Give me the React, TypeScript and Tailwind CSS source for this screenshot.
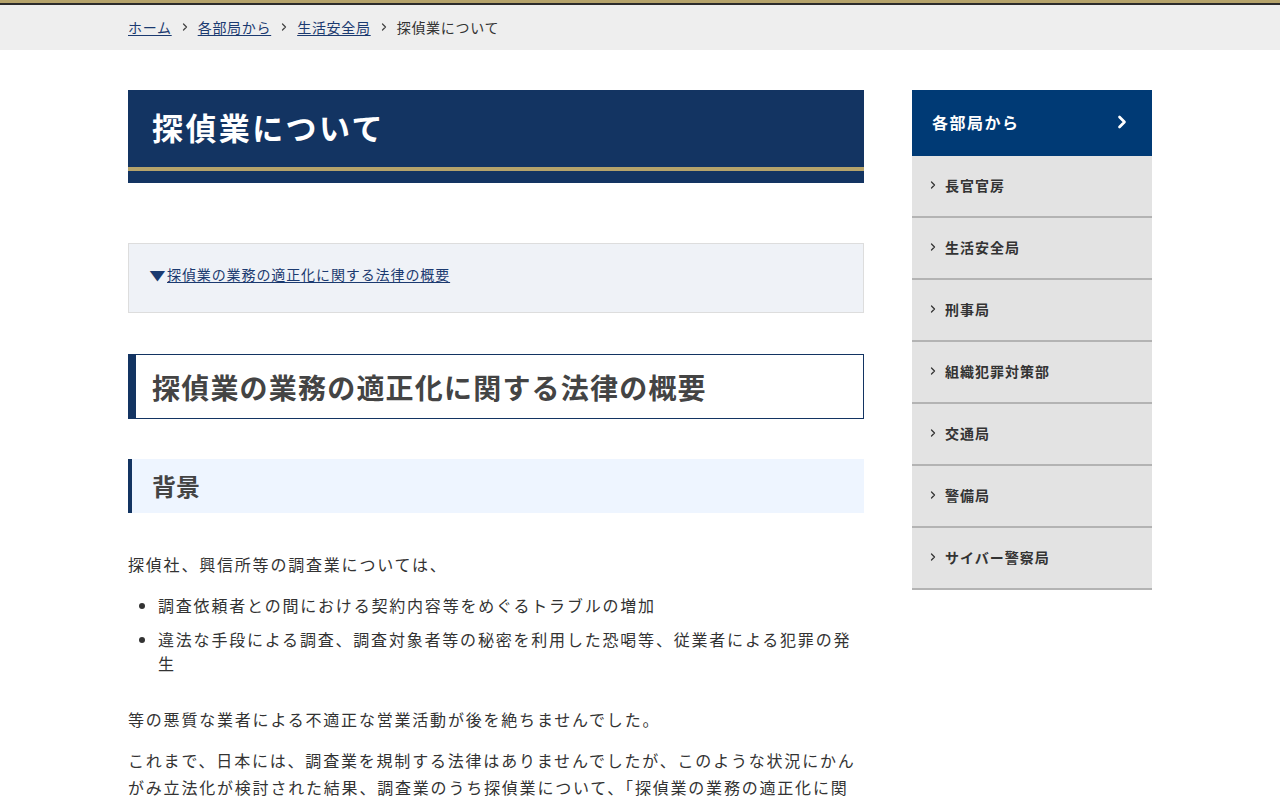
import { ChevronRight } from 'lucide-react';

const font = { fontFamily: '"Noto Sans CJK JP", "Noto Sans", sans-serif' };

const bureaus = ['長官官房', '生活安全局', '刑事局', '組織犯罪対策部', '交通局', '警備局', 'サイバー警察局'];

export default function App() {
  return (
    <div className="min-h-screen bg-white text-[#333]" style={font}>
      <div className="h-[3px] bg-[#b5a36b]" />
      <div className="h-[2px] bg-[#2b2b2b]" />
      <nav className="bg-[#eeeeee] h-[45px] flex items-center">
        <div className="w-[1024px] mx-auto flex items-center gap-[7px] text-[14px] tracking-[0.7px] -mt-[1px]">
          <a href="#" className="text-[#1b3a70] underline underline-offset-2 decoration-1">ホーム</a>
          <ChevronRight className="w-[12px] h-[12px] text-[#444]" strokeWidth={2.5} />
          <a href="#" className="text-[#1b3a70] underline underline-offset-2 decoration-1">各部局から</a>
          <ChevronRight className="w-[12px] h-[12px] text-[#444]" strokeWidth={2.5} />
          <a href="#" className="text-[#1b3a70] underline underline-offset-2 decoration-1">生活安全局</a>
          <ChevronRight className="w-[12px] h-[12px] text-[#444]" strokeWidth={2.5} />
          <span className="text-[#333]">探偵業について</span>
        </div>
      </nav>

      <div className="w-[1024px] mx-auto flex gap-[48px] pt-[40px]">
        <main className="w-[736px]">
          <div className="bg-[#133462]">
            <h1 className="h-[77px] px-[24px] flex items-center text-[31px] tracking-[2.4px] font-bold text-white pb-[3px]">探偵業について</h1>
            <div className="h-[4px] bg-[#b5a36b]" />
            <div className="h-[12px]" />
          </div>

          <div className="mt-[60px] h-[70px] bg-[#eff2f7] border border-[#dddddd] flex items-center pl-[22px] pb-[8px]">
            <span className="text-[#1b3a70] text-[13px] mr-[3px] leading-none scale-x-125">▼</span>
            <a href="#" className="text-[14px] tracking-[0.9px] text-[#1b3a70] underline underline-offset-2 decoration-1">探偵業の業務の適正化に関する法律の概要</a>
          </div>

          <h2 className="mt-[41px] h-[65px] border border-[#133462] border-l-[8px] flex items-center pl-[16px] text-[28px] tracking-[1.2px] font-bold text-[#444]">
            探偵業の業務の適正化に関する法律の概要
          </h2>

          <h3 className="mt-[40px] h-[54px] bg-[#eef5ff] border-l-[4px] border-[#133462] flex items-center pl-[20px] text-[24px] font-bold text-[#444]">
            背景
          </h3>

          <div className="text-[16px] leading-[28px] tracking-[1.8px] text-[#333]">
            <p className="mt-[37px]">探偵社、興信所等の調査業については、</p>
            <ul className="mt-[15px] pl-[30px] list-disc marker:text-[#333] space-y-[10px]">
              <li className="leading-[24px]">調査依頼者との間における契約内容等をめぐるトラブルの増加</li>
              <li className="leading-[24px]">違法な手段による調査、調査対象者等の秘密を利用した恐喝等、従業者による犯罪の発生</li>
            </ul>
            <p className="mt-[30px]">等の悪質な業者による不適正な営業活動が後を絶ちませんでした。</p>
            <p className="mt-[14px] leading-[27px]">
              これまで、日本には、調査業を規制する法律はありませんでしたが、このような状況にかんがみ立法化が検討された結果、調査業のうち探偵業について、「探偵業の業務の適正化に関する法律」が制定されました。
            </p>
          </div>
        </main>

        <aside className="w-[240px]">
          <div className="h-[66px] bg-[#003a75] flex items-center justify-between pl-[20px] pr-[20px] pb-[2px]">
            <span className="text-[16px] tracking-[1.5px] font-bold text-white">各部局から</span>
            <ChevronRight className="w-[20px] h-[20px] text-white" strokeWidth={3.2} />
          </div>
          {bureaus.map((b) => (
            <a
              key={b}
              href="#"
              className="h-[62px] bg-[#e3e3e3] border-b-[2px] border-[#b3b3b3] flex items-center pl-[15px] gap-[6px] text-[14px] tracking-[1px] font-bold text-[#333] pb-[2px]"
            >
              <ChevronRight className="w-[12px] h-[12px] text-[#333]" strokeWidth={2.5} />
              <span>{b}</span>
            </a>
          ))}
        </aside>
      </div>
    </div>
  );
}
